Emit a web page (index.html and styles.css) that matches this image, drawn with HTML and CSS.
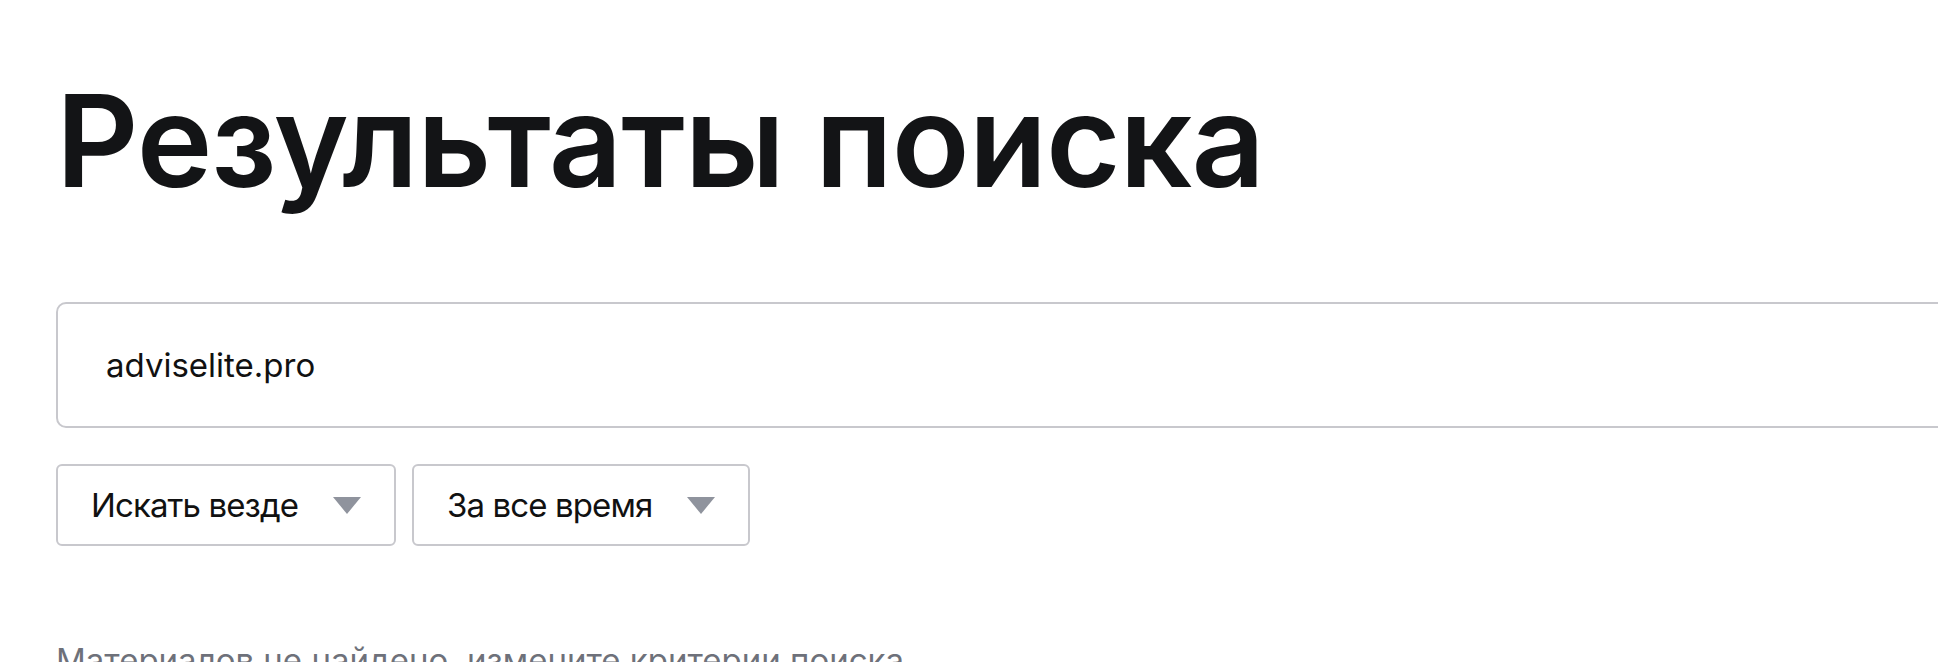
FILE: index.html
```html
<!DOCTYPE html>
<html lang="ru">
<head>
    <meta charset="UTF-8">
    <meta name="viewport" content="width=device-width, initial-scale=1.0">
    <title>Результаты поиска</title>
    <link rel="stylesheet" href="styles.css">
</head>
<body>
    <div class="page">
        <h1 class="title">Результаты поиска</h1>
        <div class="search">
            <input type="text" class="search-input" value="adviselite.pro">
        </div>
        <div class="filters">
            <div class="filter">
                <span>Искать везде</span>
                <svg class="arrow" width="28" height="17" viewBox="0 0 28 17"><polygon points="0,0 28,0 14,17" /></svg>
            </div>
            <div class="filter">
                <span>За все время</span>
                <svg class="arrow" width="28" height="17" viewBox="0 0 28 17"><polygon points="0,0 28,0 14,17" /></svg>
            </div>
        </div>
        <p class="empty">Материалов не найдено, измените критерии поиска</p>
    </div>
</body>
</html>
```

FILE: styles.css
```css
body {
    margin: 0;
    font-family: Inter, "Noto Sans", sans-serif;
    background-color: #fff;
    color: #131416;
    overflow: hidden;
}
.page {
    padding: 77px 0 0 56px;
}
.title {
    margin: 0;
    font-size: 128px;
    line-height: 128px;
    font-weight: 600;
    letter-spacing: -1px;
    color: #131416;
}
.search {
    margin-top: 97px;
    width: 2000px;
}
.search-input {
    box-sizing: border-box;
    width: 100%;
    height: 126px;
    padding: 0 48px;
    font-family: inherit;
    font-size: 33px;
    color: #111;
    border: 2px solid #c8c8cd;
    border-radius: 10px;
    outline: none;
}
.filters {
    display: flex;
    gap: 16px;
    margin-top: 36px;
}
.filter {
    box-sizing: border-box;
    display: flex;
    align-items: center;
    gap: 35px;
    height: 82px;
    padding: 0 33px;
    font-size: 33px;
    letter-spacing: -0.9px;
    color: #111;
    border: 2px solid #c8c8cd;
    border-radius: 6px;
}
.arrow {
    fill: #8f939d;
}
.empty {
    margin: 94px 0 0;
    font-size: 33px;
    color: #6e717a;
}
```
